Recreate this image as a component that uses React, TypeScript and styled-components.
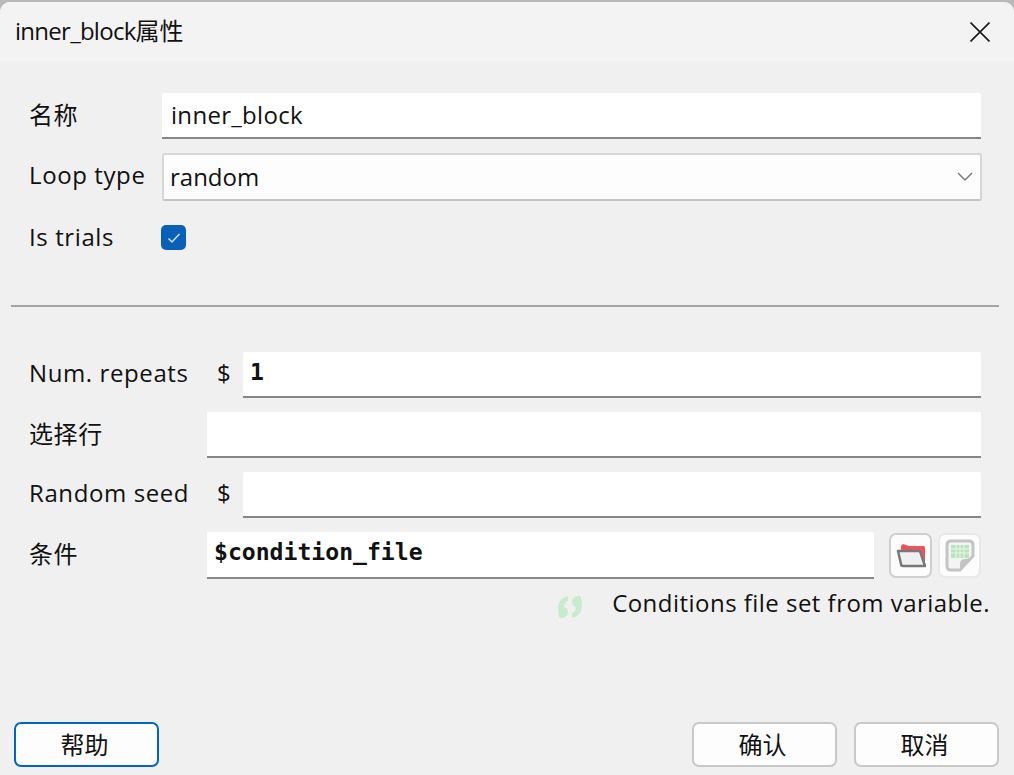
import { createGlobalStyle, styled } from 'styled-components';

const GlobalStyle = createGlobalStyle`
  html, body {
    margin: 0;
    padding: 0;
    background: #b9b9b9;
  }
  body {
    font-family: 'Open Sans', 'Noto Sans CJK SC', sans-serif;
    font-size: 24px;
    color: #111;
  }
`;

const Dialog = styled.div`
  width: 1014px;
  height: 775px;
  box-sizing: border-box;
  padding-top: 2px;
  overflow: hidden;
`
const Frame = styled.div`
  height: 773px;
  display: flex;
  flex-direction: column;
  background: #f0f0f0;
  border-radius: 10px 10px 0 0;
  overflow: hidden;
`
const TitleBar = styled.div`
  height: 60px;
  flex: none;
  display: flex;
  align-items: center;
  justify-content: space-between;
  padding: 0 24px 0 15px;
  background: #f3f3f3;
`
const Title = styled.span`
  line-height: 60px;
  letter-spacing: -0.73px;
  padding-bottom: 2px;
`
const TitleCjk = styled.span`
  letter-spacing: 0;
`
const CloseBtn = styled.button`
  width: 20px;
  height: 20px;
  padding: 0;
  border: 0;
  background: none;
  display: flex;
`
const Body = styled.div`
  flex: 1;
  display: flex;
  flex-direction: column;
  padding: 31px 15px 8px 14px;
`
const Section = styled.div<{ $gap: number }>`
  display: flex;
  flex-direction: column;
  gap: ${p => p.$gap}px;
  padding: 0 18px 0 15px;
`
const Row = styled.div`
  display: flex;
  align-items: center;
`
const CheckRow = styled(Row)`
  margin-top: 5px;
`
const Label = styled.label<{ $w: number; $up?: number }>`
  width: ${p => p.$w}px;
  flex: none;
  white-space: nowrap;
  letter-spacing: 0.6px;
  padding-bottom: ${p => p.$up ?? 6}px;
`
const Dollar = styled.span`
  width: 36px;
  flex: none;
  padding: 0 0 6px 10px;
  box-sizing: border-box;
`
const Field = styled.input<{ $mono?: boolean; $h?: number }>`
  flex: 1;
  min-width: 0;
  height: ${p => p.$h ?? 46}px;
  box-sizing: border-box;
  border: 0;
  border-bottom: 2px solid #868686;
  border-radius: 2px 2px 0 0;
  outline: 0;
  background: #fff;
  color: #111;
  padding: 0 8px ${p => (p.$mono ? 5 : 2)}px ${p => (p.$mono ? 7 : 9)}px;
  font-family: ${p => (p.$mono ? "'DejaVu Sans Mono', monospace" : "inherit")};
  font-weight: ${p => (p.$mono ? 700 : 400)};
  font-size: ${p => (p.$mono ? 23.1 : 24)}px;
  letter-spacing: ${p => (p.$mono ? 0 : 0.3)}px;
`
const Combo = styled.div`
  flex: 1;
  height: 48px;
  box-sizing: border-box;
  margin-right: -1px;
  display: flex;
  align-items: center;
  justify-content: space-between;
  padding: 0 7px 2px 6px;
  background: #fdfdfd;
  border: 2px solid #d6d6d6;
  border-bottom-color: #c4c4c4;
  border-radius: 3px;
`
const CheckBox = styled.span`
  width: 25px;
  height: 25px;
  border-radius: 5px;
  background: #0a5fb8;
  display: flex;
  align-items: center;
  justify-content: center;
`
const Divider = styled.hr`
  width: calc(100% + 3px);
  height: 2px;
  margin: 50px 0 45px -3px;
  border: 0;
  background: #a4a4a4;
  flex: none;
`
const IconBtn = styled.button<{ $off?: boolean }>`
  width: 43px;
  height: 45px;
  flex: none;
  padding: 0;
  margin-left: ${p => (p.$off ? 6 : 15)}px;
  display: flex;
  align-items: center;
  justify-content: center;
  background: #fcfcfc;
  border: 2px solid ${p => (p.$off ? '#e8e8e8' : '#cfcfcf')};
  border-radius: 7px;
`
const Note = styled.div`
  display: flex;
  align-items: center;
  justify-content: flex-end;
  gap: 29px;
  margin: 6px 9px 0 0;
  height: 34px;
  white-space: nowrap;
  letter-spacing: 0.47px;
  svg {
    margin-top: 10px;
  }
`
const Footer = styled.div`
  margin-top: auto;
  display: flex;
  align-items: center;
`
const Btn = styled.button<{ $primary?: boolean }>`
  width: 145px;
  height: 45px;
  box-sizing: border-box;
  background: #fdfdfd;
  border: 2px solid ${p => (p.$primary ? '#0067c0' : '#c8c8c8')};
  border-radius: 7px;
  font-family: inherit;
  font-size: 24px;
  color: #111;
  padding: 0 4px 2px 0;
`
const Spacer = styled.div`
  flex: 1;
`
const BtnGap = styled.div`
  width: 17px;
`

function FolderIcon() {
  return (
    <svg width="30" height="26" viewBox="0 0 30 26" fill="none">
      <path d="M5 3 L7 1 L13 3 H28 Q29 3 29 5 V22 L25 8 H5 Z" fill="#f0525c" />
      <path d="M2 8 H24 L29 23 H7 Q5 23 5 21 Z" fill="#efefef" stroke="#77777d" strokeWidth="2.5" strokeLinejoin="round" />
    </svg>
  )
}

function SheetIcon() {
  return (
    <svg width="30" height="33" viewBox="0 0 30 33" fill="none">
      <path d="M6 2 H24 Q28 2 28 6 V17 L15 31 H6 Q2 31 2 27 V6 Q2 2 6 2 Z" fill="#f4f4f4" stroke="#c4c4c4" strokeWidth="3" />
      <rect x="6" y="6" width="18" height="13" fill="#b7e4bb" />
      <path d="M11 6 V19 M15 6 V19 M19 6 V19 M6 10 H24 M6 14 H24" stroke="#e6f6e8" strokeWidth="1" />
      <path d="M28 17 L15 31 V25 Q15 20 20 20 Q26 20 28 17 Z" fill="#c4c4c4" />
    </svg>
  )
}

function QuoteIcon() {
  return (
    <svg width="26" height="24" viewBox="0 0 26 24" fill="#c9ebcd">
      <path d="M11 1 Q2 3 1 12 Q1 21 3 23 L5 23 Q11 22 11 17 Q11 13 7 12 Q7 7 11 6 Z" />
      <path d="M15 23 Q24 21 25 12 Q25 3 23 1 L21 1 Q15 2 15 7 Q15 11 19 12 Q19 17 15 18 Z" />
    </svg>
  )
}

function App() {
  return (
    <Dialog>
      <GlobalStyle />
      <Frame>
        <TitleBar>
          <Title>inner_block<TitleCjk>属性</TitleCjk></Title>
          <CloseBtn aria-label="close">
            <svg width="20" height="20" viewBox="0 0 20 20">
              <path d="M0.5 0.5 L19.5 19.5 M19.5 0.5 L0.5 19.5" stroke="#1a1a1a" strokeWidth="1.6" />
            </svg>
          </CloseBtn>
        </TitleBar>
        <Body>
          <Section $gap={14}>
            <Row>
              <Label $w={133}>名称</Label>
              <Field defaultValue="inner_block" />
            </Row>
            <Row>
              <Label $w={133}>Loop type</Label>
              <Combo>
                random
                <svg width="16" height="9" viewBox="0 0 16 9" fill="none">
                  <path d="M1 1 L8 8 L15 1" stroke="#757575" strokeWidth="1.4" />
                </svg>
              </Combo>
            </Row>
            <CheckRow>
              <Label $w={132} $up={2}>Is trials</Label>
              <CheckBox>
                <svg width="14" height="12" viewBox="0 0 14 12" fill="none">
                  <path d="M1.5 6.5 L5 10 L12.5 2" stroke="#cfe2f5" strokeWidth="1.5" />
                </svg>
              </CheckBox>
            </CheckRow>
          </Section>
          <Divider />
          <Section $gap={14}>
            <Row>
              <Label $w={178}>Num. repeats</Label>
              <Dollar>$</Dollar>
              <Field $mono defaultValue="1" />
            </Row>
            <Row>
              <Label $w={178}>选择行</Label>
              <Field />
            </Row>
            <Row>
              <Label $w={178}>Random seed</Label>
              <Dollar>$</Dollar>
              <Field />
            </Row>
            <Row>
              <Label $w={178}>条件</Label>
              <Field $mono $h={47} defaultValue="$condition_file" />
              <IconBtn><FolderIcon /></IconBtn>
              <IconBtn $off><SheetIcon /></IconBtn>
            </Row>
          </Section>
          <Note>
            <QuoteIcon />
            <span>Conditions file set from variable.</span>
          </Note>
          <Footer>
            <Btn $primary>帮助</Btn>
            <Spacer />
            <Btn>确认</Btn>
            <BtnGap />
            <Btn>取消</Btn>
          </Footer>
        </Body>
      </Frame>
    </Dialog>
  );
}

export default App
